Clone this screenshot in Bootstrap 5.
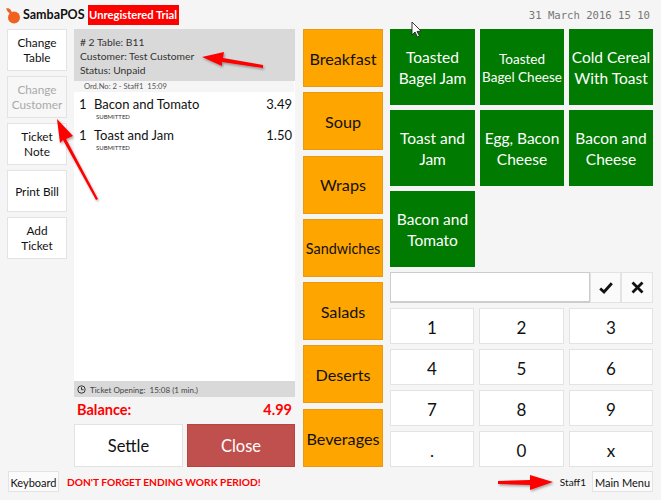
<!DOCTYPE html>
<html lang="en">

<head>
    <meta charset="UTF-8">
    <meta name="viewport" content="width=device-width, initial-scale=1.0">
    <title>SambaPOS</title>
    <link href="https://cdn.jsdelivr.net/npm/bootstrap@5.3.3/dist/css/bootstrap.min.css" rel="stylesheet">
    <style>
        html, body { height: 500px; overflow: hidden; }
        body { background: #f5f5f5; font-family: Lato, "Open Sans", sans-serif; color: #111; position: relative; }
        .pos-top { height: 29px; padding: 5px 11px 4px 6px; }
        .pos-brand { font-size: 12.5px; font-weight: 700; margin-left: 2px; color: #111; }
        .pos-trial { background: #f00; color: #fff; font-size: 11.2px; font-weight: 700; width: 91px; text-align: center; white-space: nowrap; height: 20px; line-height: 20px; margin-left: 3px; }
        .pos-date { font-family: "DejaVu Sans Mono", monospace; font-size: 10.6px; color: #777; padding-top: 2px; }
        .pos-main { display: grid; grid-template-columns: 60px 221px 80px 263px; column-gap: 7px; height: 438px; padding-left: 7px; }
        .pos-btn { background: #fff; border: 1px solid #e3e3e3; border-radius: 0; padding: 2px 0 0; color: #111; line-height: 1.25; font-size: 11.8px; white-space: nowrap; }
        .pos-btn:disabled { background: #f7f7f7; color: #aaa; opacity: 1; border-color: #e3e3e3; }
        .pos-side { display: grid; grid-template-rows: repeat(5, 42px); row-gap: 5px; }
        .pos-ticket { width: 221px; }
        .pos-tickethead { background: #d9d9d9; height: 52px; padding: 6px 6px 0; font-size: 10.3px; line-height: 14px; color: #333; }
        .pos-tickethead div { white-space: nowrap; }
        .pos-ticketbody { background: #fff; height: 300px; }
        .pos-ordline { background: #f5f5f5; font-size: 7.6px; height: 11px; line-height: 11px; margin-right: 1px; padding-left: 10px; color: #555; }
        .pos-order { padding: 4px 3px 0 5px; height: 30.5px; font-size: 13px; line-height: 17px; }
        .pos-order .pos-qty { width: 15px; }
        .pos-sub { font-size: 6px; line-height: 7px; padding-left: 17px; color: #333; }
        .pos-ticketfoot { background: #d9d9d9; height: 16px; font-size: 8px; padding: 1px 0 0 3px; color: #444; }
        .pos-balance { color: #f00; font-weight: 700; font-size: 14.5px; height: 27px; padding: 0 3px 2px 3px; }
        .pos-pay { display: grid; grid-template-columns: 109px 108px; column-gap: 4px; height: 43px; }
        .pos-pay .btn { font-size: 16.5px; padding: 2px 0 0; line-height: 1.25; }
        .pos-close { background: #c0504d; border: 1px solid #b8433f; color: #fff; border-radius: 0; }
        .pos-close:hover { background: #c0504d; color: #fff; }
        .pos-cats { display: grid; grid-template-rows: repeat(7, 58px); row-gap: 5.3px; margin-left: 1px; width: 80px; }
        .pos-cat { background: #ffa500; border: 1px solid #ea9a10; border-radius: 0; padding: 2px 0 0; font-size: 16.2px; color: #111; white-space: nowrap; }
        .pos-cat.pos-tight { font-size: 14.4px; }
        .pos-right { width: 263px; margin-left: 1px; }
        .pos-products { display: grid; grid-template-columns: 85px 84px 84px; grid-template-rows: repeat(3, 76px); gap: 5px; height: 238px; }
        .pos-prod { background: #007a00; color: #fff; border: 0; border-radius: 0; padding: 2px 2px 0; font-size: 15.5px; line-height: 21px; }
        .pos-prod:hover { background: #007a00; color: #fff; }
        .pos-prod.pos-tight { font-size: 13.5px; line-height: 18px; }
        .pos-entry { display: grid; grid-template-columns: 200px 31px 32px; grid-template-rows: 31px; height: 31px; margin-top: 5px; }
        .pos-entry .pos-btn { padding: 0; background: #fafafa; }
        .pos-input { background: #fff; border: 1px solid #ccc; border-bottom-width: 2px; border-radius: 0; box-shadow: none; min-height: 0; height: 31px; }
        .pos-pad { display: grid; grid-template-columns: 84px 85px 84px; grid-template-rows: repeat(4, 36px); gap: 5px; margin-top: 5px; }
        .pos-pad .btn { font-size: 17px; padding-top: 3px; }
        .pos-bottom { height: 33px; padding: 4px 8px 8px 8px; }
        .pos-bottom .pos-btn { font-size: 11px; height: 21px; background: #fbfbfb; }
        .pos-kbd { width: 51px; }
        .pos-warn { color: #f00; font-size: 10.2px; font-weight: 700; margin-left: 8px; padding-top: 2px; }
        .pos-staff { font-size: 10px; margin-right: 6px; padding-top: 1px; }
        .pos-menu { width: 61px; }
        .pos-overlay { position: absolute; left: 0; top: 0; pointer-events: none; }
    </style>
</head>

<body>
    <div class="pos-top d-flex align-items-center">
        <svg width="15" height="17" viewBox="0 0 15 17">
            <path d="M0 1.5 Q4 0 6 5.500 L4.500 6.500 Q1 5 0 1.500Z" fill="#e8612c" />
            <circle cx="8" cy="10.500" r="6" fill="#f0601f" />
        </svg>
        <span class="pos-brand">SambaPOS</span>
        <span class="pos-trial">Unregistered Trial</span>
        <span class="pos-date ms-auto">31 March 2016 15 10</span>
    </div>

    <div class="pos-main">
        <div class="pos-side">
            <button class="btn pos-btn">Change<br>Table</button>
            <button class="btn pos-btn" disabled>Change<br>Customer</button>
            <button class="btn pos-btn">Ticket<br>Note</button>
            <button class="btn pos-btn">Print Bill</button>
            <button class="btn pos-btn">Add<br>Ticket</button>
        </div>

        <div class="pos-ticket">
            <div class="pos-tickethead">
                <div># 2 Table: B11</div>
                <div>Customer: Test Customer</div>
                <div>Status: Unpaid</div>
            </div>
            <div class="pos-ticketbody">
                <div class="pos-ordline">Ord.No: 2 - Staff1&nbsp; 15:09</div>
                <div class="pos-order">
                    <div class="d-flex"><span class="pos-qty">1</span><span>Bacon and Tomato</span><span class="ms-auto">3.49</span></div>
                    <div class="pos-sub">SUBMITTED</div>
                </div>
                <div class="pos-order">
                    <div class="d-flex"><span class="pos-qty">1</span><span>Toast and Jam</span><span class="ms-auto">1.50</span></div>
                    <div class="pos-sub">SUBMITTED</div>
                </div>
            </div>
            <div class="pos-ticketfoot d-flex align-items-center">
                <svg width="9" height="9" viewBox="0 0 9 9" class="me-1">
                    <circle cx="4.5" cy="4.5" r="3.7" fill="none" stroke="#333" />
                    <path d="M4.5 2.2V4.7H6.6" fill="none" stroke="#333" />
                </svg>
                <span>Ticket Opening:&nbsp; 15:08 (1 min.)</span>
            </div>
            <div class="pos-balance d-flex align-items-center justify-content-between">
                <span>Balance:</span><span>4.99</span>
            </div>
            <div class="pos-pay">
                <button class="btn pos-btn">Settle</button>
                <button class="btn pos-close">Close</button>
            </div>
        </div>

        <div class="pos-cats">
            <button class="btn pos-cat">Breakfast</button>
            <button class="btn pos-cat">Soup</button>
            <button class="btn pos-cat">Wraps</button>
            <button class="btn pos-cat pos-tight">Sandwiches</button>
            <button class="btn pos-cat">Salads</button>
            <button class="btn pos-cat">Deserts</button>
            <button class="btn pos-cat">Beverages</button>
        </div>

        <div class="pos-right">
            <div class="pos-products">
                <button class="btn pos-prod">Toasted<br>Bagel Jam</button>
                <button class="btn pos-prod pos-tight">Toasted<br>Bagel Cheese</button>
                <button class="btn pos-prod">Cold Cereal<br>With Toast</button>
                <button class="btn pos-prod">Toast and<br>Jam</button>
                <button class="btn pos-prod">Egg, Bacon<br>Cheese</button>
                <button class="btn pos-prod">Bacon and<br>Cheese</button>
                <button class="btn pos-prod">Bacon and<br>Tomato</button>
            </div>
            <div class="pos-entry">
                <input class="form-control pos-input" type="text">
                <button class="btn pos-btn d-flex align-items-center justify-content-center">
                    <svg width="14" height="12" viewBox="0 0 14 12"><path d="M1.2 6.5L5 10L12.800 1.2" fill="none" stroke="#111" stroke-width="2.8" /></svg>
                </button>
                <button class="btn pos-btn d-flex align-items-center justify-content-center">
                    <svg width="13" height="13" viewBox="0 0 13 13"><path d="M1.5 1.5L11.5 11.5M11.5 1.5L1.5 11.5" fill="none" stroke="#111" stroke-width="2.8" /></svg>
                </button>
            </div>
            <div class="pos-pad">
                <button class="btn pos-btn">1</button>
                <button class="btn pos-btn">2</button>
                <button class="btn pos-btn">3</button>
                <button class="btn pos-btn">4</button>
                <button class="btn pos-btn">5</button>
                <button class="btn pos-btn">6</button>
                <button class="btn pos-btn">7</button>
                <button class="btn pos-btn">8</button>
                <button class="btn pos-btn">9</button>
                <button class="btn pos-btn">.</button>
                <button class="btn pos-btn">0</button>
                <button class="btn pos-btn">x</button>
            </div>
        </div>
    </div>

    <div class="pos-bottom d-flex align-items-center">
        <button class="btn pos-btn pos-kbd">Keyboard</button>
        <span class="pos-warn">DON'T FORGET ENDING WORK PERIOD!</span>
        <span class="pos-staff ms-auto">Staff1</span>
        <button class="btn pos-btn pos-menu">Main Menu</button>
    </div>

    <!-- arrows and mouse pointer drawn over the screenshot -->
    <svg class="pos-overlay" width="661" height="500" viewBox="0 0 661 500">
        <defs>
            <filter id="arrowShadow" x="-20%" y="-20%" width="140%" height="140%">
                <feDropShadow dx="1" dy="1.5" stdDeviation="1" flood-color="#000" flood-opacity=".35" />
            </filter>
        </defs>
        <g fill="#f00" filter="url(#arrowShadow)">
            <path d="M202 57L224 52L223 58L263 65L263 68L222 62L222 66Z" />
            <path d="M57 119L73 136L66 139L98 199L96 200L63 140L60 143Z" />
            <path d="M553 482L530 475L530 480L498 481L498 484L530 485L530 490Z" />
        </g>
        <path d="M412 22V35L415 32L417.500 37L419.500 36L417 31.500L421 31Z" fill="#fff" stroke="#222" stroke-width=".9" />
    </svg>

    <script src="https://cdn.jsdelivr.net/npm/bootstrap@5.3.3/dist/js/bootstrap.bundle.min.js"></script>
</body>

</html>
